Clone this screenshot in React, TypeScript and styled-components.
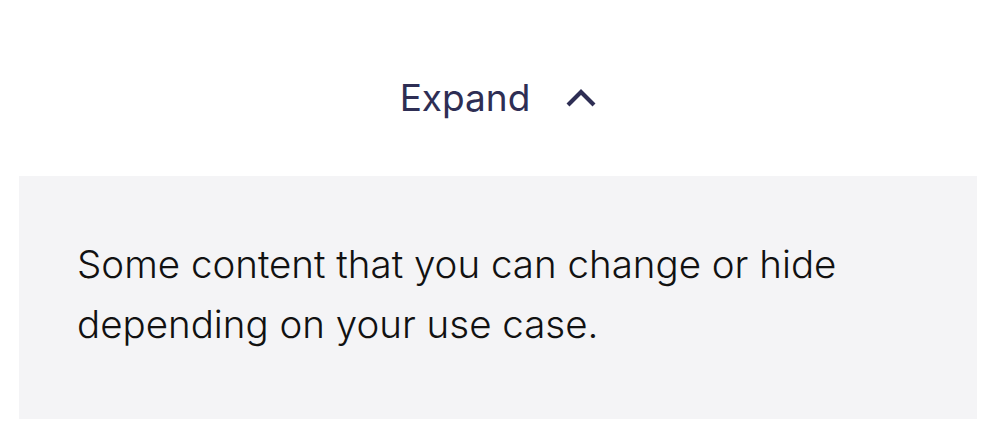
import React, { useState } from "react";
import styled, { createGlobalStyle } from "styled-components";

const GlobalStyle = createGlobalStyle`
  html, body {
    margin: 0;
    padding: 0;
    background: #ffffff;
  }
  body {
    font-family: Inter, Lato, "Noto Sans", sans-serif;
  }
`;

const Page = styled.div`
  padding: 0 19px;
`;

const Toggle = styled.button`
  display: flex;
  align-items: center;
  justify-content: center;
  gap: 36px;
  width: 100%;
  border: none;
  background: transparent;
  padding: 76px 0 56px;
  margin: 0;
  cursor: pointer;
  font-family: inherit;
  font-size: 37px;
  font-weight: 400;
  line-height: 44px;
  color: #2e2e54;
`;

const Chevron = styled.svg<{ $open: boolean }>`
  width: 30px;
  height: 20px;
  transform: ${(p) => (p.$open ? "none" : "rotate(180deg)")};
`;

const Panel = styled.div`
  background: #f4f4f6;
  padding: 58px 58px 65px;
`;

const Text = styled.p`
  margin: 0;
  font-size: 38.5px;
  font-weight: 300;
  line-height: 60px;
  color: #111111;
  max-width: 800px;
`;

export default function App() {
  const [open, setOpen] = useState(true);
  return (
    <Page>
      <GlobalStyle />
      <Toggle onClick={() => setOpen(!open)}>
        <span>Expand</span>
        <Chevron $open={open} viewBox="0 0 30 20" fill="none">
          <path d="M2 17 L15 4 L28 17" stroke="currentColor" strokeWidth="4.2" />
        </Chevron>
      </Toggle>
      {open && (
        <Panel>
          <Text>Some content that you can change or hide depending on your use case.</Text>
        </Panel>
      )}
    </Page>
  );
}
